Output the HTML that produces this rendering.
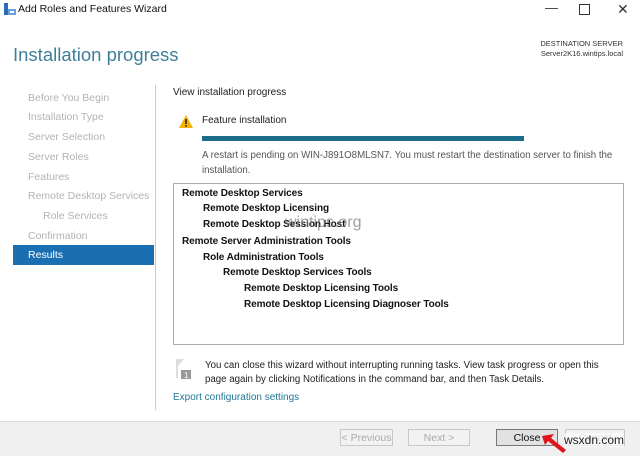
<!DOCTYPE html>
<html><head><style>
body{margin:0;width:640px;height:455px;overflow:hidden;background:#fff;font-family:"Liberation Sans",sans-serif;position:relative}
.a{position:absolute;white-space:nowrap}
.nav{position:absolute;left:28px;font-size:10.5px;color:#b3b3b3}
.t{position:absolute;font-size:10px;font-weight:bold;color:#111;white-space:nowrap;letter-spacing:-0.1px}
.btn{position:absolute;top:429px;height:17px;border:1px solid #c8c8c8;background:#f2f2f2;font-size:10.5px;color:#aaa;text-align:center;line-height:17px;box-sizing:border-box}
</style></head><body>
<svg class="a" style="left:3px;top:2px" width="14" height="14"><rect x="1" y="1" width="4" height="12" fill="#2a6db5"/><rect x="5" y="7" width="8" height="6" fill="#6aa0d8"/><rect x="7" y="9" width="4" height="2" fill="#fff"/></svg>
<div class="a" style="left:18px;top:3px;font-size:10.5px;color:#111">Add Roles and Features Wizard</div>
<div class="a" style="left:545px;top:0;font-size:13px;color:#333">—</div>
<div class="a" style="left:579px;top:4px;width:9px;height:9px;border:1px solid #333"></div>
<div class="a" style="left:617px;top:1px;font-size:14px;color:#333">✕</div>
<div class="a" style="left:13px;top:44px;font-size:18.5px;color:#3f7f99">Installation progress</div>
<div class="a" style="right:17px;top:39px;font-size:7.5px;color:#333;text-align:right;line-height:10px">DESTINATION SERVER<br>Server2K16.wintips.local</div>
<div class="a" style="left:155px;top:85px;width:1px;height:325px;background:#ccc"></div>
<div class="nav" style="top:92px">Before You Begin</div>
<div class="nav" style="top:111px">Installation Type</div>
<div class="nav" style="top:131px">Server Selection</div>
<div class="nav" style="top:151px">Server Roles</div>
<div class="nav" style="top:171px">Features</div>
<div class="nav" style="top:190px">Remote Desktop Services</div>
<div class="nav" style="top:210px;left:43px">Role Services</div>
<div class="nav" style="top:230px">Confirmation</div>
<div class="a" style="left:13px;top:245px;width:141px;height:20px;background:#1a6fb3"></div>
<div class="nav" style="top:249px;color:#fff">Results</div>
<div class="a" style="left:173px;top:87px;font-size:10px;color:#222">View installation progress</div>
<svg class="a" style="left:178px;top:114px" width="16" height="15"><path d="M8 1 L15 14 L1 14 Z" fill="#f5b400"/><rect x="7.2" y="5" width="1.6" height="5" fill="#222"/><rect x="7.2" y="11" width="1.6" height="1.6" fill="#222"/></svg>
<div class="a" style="left:202px;top:115px;font-size:10px;color:#222">Feature installation</div>
<div class="a" style="left:202px;top:136px;width:322px;height:5px;background:#1d6e8a"></div>
<div class="a" style="left:202px;top:148px;font-size:9.7px;color:#555;line-height:15px">A restart is pending on WIN-J891O8MLSN7. You must restart the destination server to finish the<br>installation.</div>
<div class="a" style="left:173px;top:183px;width:451px;height:162px;border:1px solid #aaa;box-sizing:border-box"></div>
<div class="t" style="left:182px;top:188px">Remote Desktop Services</div>
<div class="t" style="left:203px;top:203px">Remote Desktop Licensing</div>
<div class="t" style="left:203px;top:219px">Remote Desktop Session Host</div>
<div class="a" style="left:285px;top:214px;font-size:16px;color:#777;opacity:.7">wintips.org</div>
<div class="t" style="left:182px;top:236px">Remote Server Administration Tools</div>
<div class="t" style="left:203px;top:252px">Role Administration Tools</div>
<div class="t" style="left:223px;top:267px">Remote Desktop Services Tools</div>
<div class="t" style="left:244px;top:283px">Remote Desktop Licensing Tools</div>
<div class="t" style="left:244px;top:299px">Remote Desktop Licensing Diagnoser Tools</div>
<svg class="a" style="left:175px;top:358px" width="18" height="22"><path d="M1 1 L9 1 L3 8 L3 20 L1 20 Z" fill="#ddd"/><rect x="6" y="12" width="10" height="9" fill="#999"/><text x="9" y="20" font-size="8" fill="#fff" font-family="Liberation Sans">1</text></svg>
<div class="a" style="left:205px;top:359px;font-size:9.7px;color:#222;line-height:13.5px">You can close this wizard without interrupting running tasks. View task progress or open this<br>page again by clicking Notifications in the command bar, and then Task Details.</div>
<div class="a" style="left:173px;top:392px;font-size:10px;color:#1f7896">Export configuration settings</div>
<div class="a" style="left:0;top:421px;width:640px;height:34px;background:#f0f0f0;border-top:1px solid #ddd"></div>
<div class="btn" style="left:340px;width:53px">&lt; Previous</div>
<div class="btn" style="left:408px;width:62px">Next &gt;</div>
<div class="btn" style="left:496px;width:62px;border:1px solid #777;background:#e2e2e2;color:#111">Close</div>
<div class="btn" style="left:565px;width:60px">Cancel</div>
<svg class="a" style="left:540px;top:432px" width="40" height="24"><path d="M2 4 L14 2 L11 6 L26 18 L23 21 L8 9 L5 13 Z" fill="#e0141c"/></svg>
<div class="a" style="left:564px;top:433px;font-size:12px;color:#222;background:rgba(255,255,255,.6)">wsxdn.com</div>
</body></html>
